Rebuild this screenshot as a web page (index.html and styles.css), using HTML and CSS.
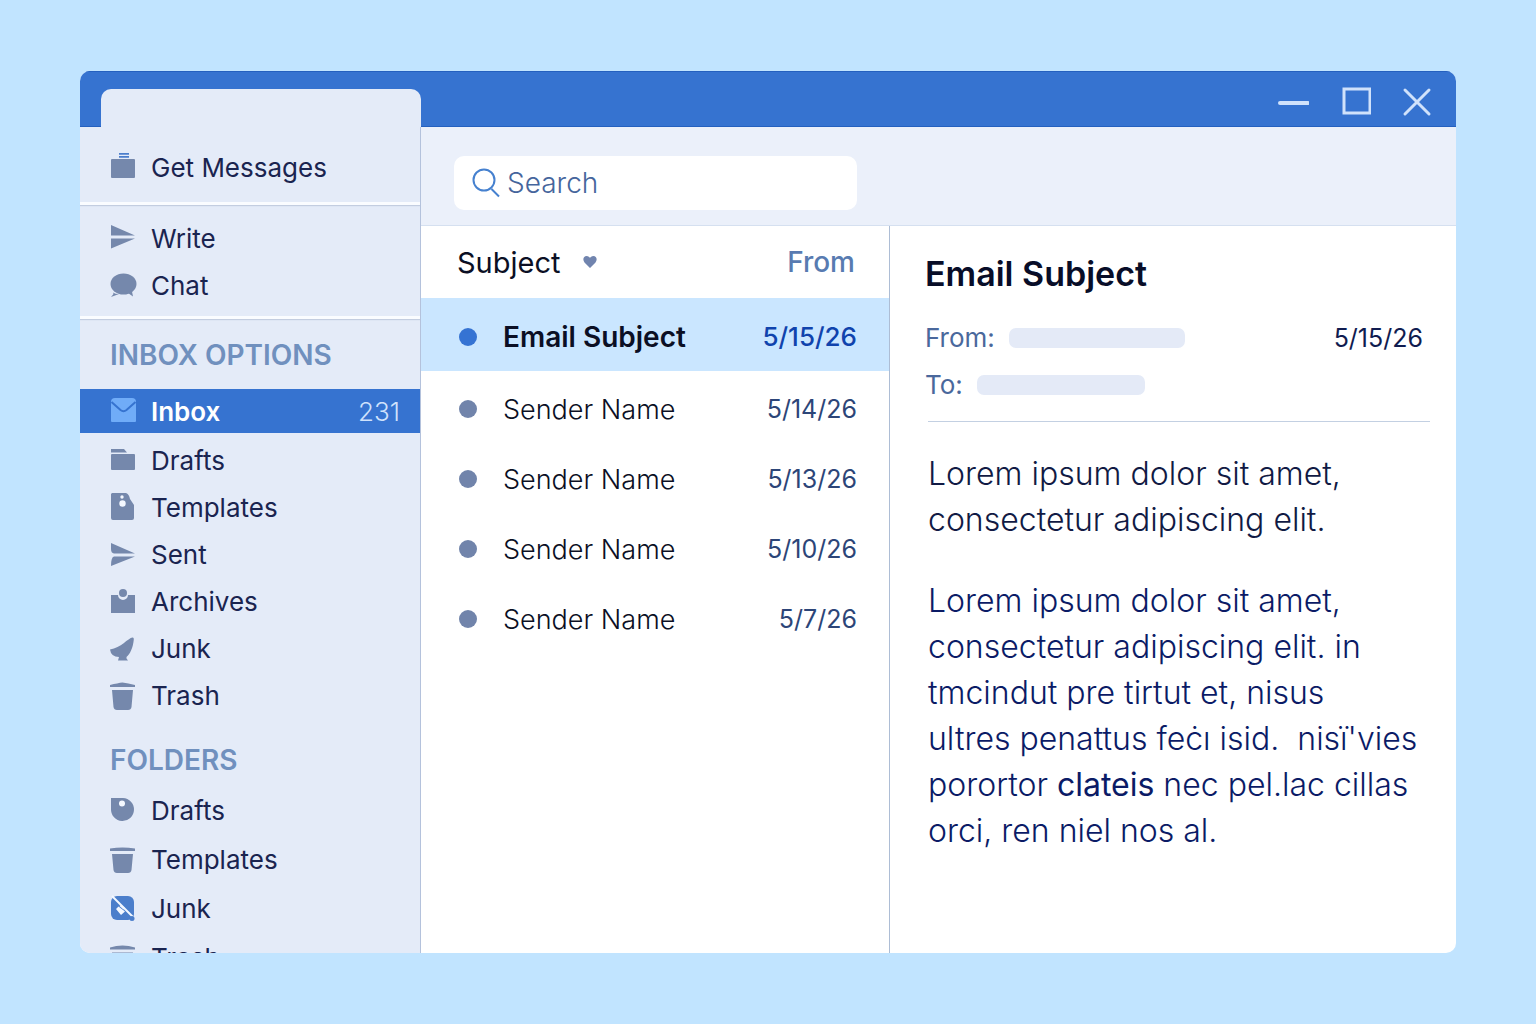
FILE: index.html
```html
<!DOCTYPE html>
<html lang="en">
<head>
    <meta charset="UTF-8">
    <meta name="viewport" content="width=device-width, initial-scale=1.0">
    <title>Mail</title>
    <link rel="stylesheet" href="styles.css">
</head>
<body>
    <div class="window">
        <header class="titlebar">
            <div class="tab"></div>
            <div class="window-controls">
                <button type="button" aria-label="Minimize">
                    <svg width="32" height="32" viewBox="0 0 32 32"><path d="M3 18h28" stroke-width="4"/></svg>
                </button>
                <button type="button" aria-label="Maximize">
                    <svg width="32" height="32" viewBox="0 0 32 32"><path d="M5 4h26v24H5z" stroke-width="3"/></svg>
                </button>
                <button type="button" aria-label="Close">
                    <svg width="32" height="32" viewBox="0 0 32 32"><path d="M4 5l24 24M28 5L4 29" stroke-width="3"/></svg>
                </button>
            </div>
        </header>

        <nav class="sidebar">
            <div class="actions">
                <button type="button" class="item">
                    <svg class="icon" viewBox="0 0 26 28"><path class="blue" d="M9-1h10v1.700H9zM9 2h10v1.700H9z"/><rect x="1" y="5" width="24" height="19" rx="1"/></svg>
                    Get Messages
                </button>
            </div>
            <div class="actions compact">
                <button type="button" class="item">
                    <svg class="icon" viewBox="0 0 26 28"><path d="M1 0l24 10.500H1zM1 13.500h24L1 23.500z"/></svg>
                    Write
                </button>
                <button type="button" class="item">
                    <svg class="icon" viewBox="0 0 26 28"><ellipse cx="13.500" cy="12" rx="13" ry="10.500"/><path d="M3 20.500q2 1.500 6 1.500l-8 3 2.500-3zM18 21l4-1.500 1 5z"/></svg>
                    Chat
                </button>
            </div>

            <h2>INBOX OPTIONS</h2>
            <a href="#inbox" class="item current">
                <svg class="icon" viewBox="0 0 26 28"><path d="M5 1h17q4 0 4 4v19q0 1-1 1H2q-1 0-1-1V5q0-4 4-4z"/><path class="flap" d="M1.500 5l9 8q3 2.400 6 0L25.500 5"/></svg>
                Inbox
                <span class="count">231</span>
            </a>
            <div class="group">
                <a href="#drafts" class="item">
                    <svg class="icon" viewBox="0 0 26 28"><path d="M1 2h13l3 3.500H1z"/><rect x="1" y="7" width="24" height="16" rx="1"/></svg>
                    Drafts
                </a>
                <a href="#templates" class="item">
                    <svg class="icon" viewBox="0 0 26 28"><path d="M2-1h14q3 1 4 6l4 6v13q0 2-2 2H3q-2 0-2-2V0z"/><circle class="hole" cx="12" cy="3" r="1.700"/><circle class="hole" cx="12.500" cy="9.500" r="3.200"/></svg>
                    Templates
                </a>
                <a href="#sent" class="item">
                    <svg class="icon" viewBox="0 0 26 28"><path d="M1 2l24 10.500H4Q1 12 1 8zM1 25q0-9 3-9.500h21z"/></svg>
                    Sent
                </a>
                <a href="#archives" class="item">
                    <svg class="icon" viewBox="0 0 26 28"><path d="M1 7h7a5 5 0 0 0 10 0h7v18H1z"/><circle cx="13" cy="5" r="4"/></svg>
                    Archives
                </a>
                <a href="#junk" class="item">
                    <svg class="icon" viewBox="0 0 26 28"><path d="M0 14.500C11 13 18 3 22.500 2.500q1.500-.2 1.300 2C23 13 20 19 16.500 22v1.500l1.500 2H8l1-3.500Q1 22 0 14.500z"/></svg>
                    Junk
                </a>
                <a href="#trash" class="item">
                    <svg class="icon" viewBox="0 0 26 28"><path d="M0 3Q8 1 12.500.5 18 1 25 3v2H0zM2 8h21l-1.500 17q-.5 3-3.500 3H7q-3 0-3.500-3z"/></svg>
                    Trash
                </a>
            </div>

            <h2 class="folders-heading">FOLDERS</h2>
            <div class="group roomy">
                <a href="#folder-drafts" class="item">
                    <svg class="icon" viewBox="0 0 26 28"><path d="M1 1h12a11.500 11.500 0 1 1-12 11z"/><circle class="hole" cx="12" cy="6.500" r="3"/></svg>
                    Drafts
                </a>
                <a href="#folder-templates" class="item">
                    <svg class="icon" viewBox="0 0 26 28"><path d="M0 2.500q12.500-2 25 0V5H0zM2 8h21l-1.500 16q-.5 3-3.500 3H7q-3 0-3.500-3z"/></svg>
                    Templates
                </a>
                <a href="#folder-junk" class="item">
                    <svg class="icon" viewBox="0 0 26 28"><rect class="blue" x="1" y="1" width="23" height="24" rx="6"/><path class="slash" d="M2 1l21 21"/><path class="hole" d="M6 14l2.500-2.500 6.500 5-4 3.500zM9.500 11l2-1 3.500 3-1.500 1.500z"/><circle class="blue" cx="22" cy="23.500" r="2.500"/></svg>
                    Junk
                </a>
                <a href="#folder-trash" class="item">
                    <svg class="icon" viewBox="0 0 26 28"><path d="M0 3.500q12.500-4 25 0v2H0zM2 8.500h21L21.500 24q-.5 3-3.500 3H7q-3 0-3.500-3z"/></svg>
                    Trash
                </a>
            </div>
        </nav>

        <div class="toolbar">
            <label class="search">
                <svg width="30" height="30" viewBox="0 0 30 30"><circle cx="12" cy="12" r="10.500"/><path d="M19.500 21l7.500 7.500"/></svg>
                <input type="search" placeholder="Search" aria-label="Search">
            </label>
        </div>

        <section class="messages">
            <table>
                <thead>
                    <tr>
                        <th colspan="2" class="subject">Subject
                            <svg width="14" height="12" viewBox="0 0 14 12"><path d="M7 12L1.500 6.500C-1 3 1 0 3.500 0 5.500 0 6.500 1 7 2 7.500 1 8.500 0 10.500 0 13 0 15 3 12.500 6.500z"/></svg>
                        </th>
                        <th class="from">From</th>
                    </tr>
                </thead>
                <tbody>
                    <tr class="selected">
                        <td class="status"><span class="dot"></span></td>
                        <td>Email Subject</td>
                        <td class="date">5/15/26</td>
                    </tr>
                    <tr>
                        <td class="status"><span class="dot"></span></td>
                        <td>Sender Name</td>
                        <td class="date">5/14/26</td>
                    </tr>
                    <tr>
                        <td class="status"><span class="dot"></span></td>
                        <td>Sender Name</td>
                        <td class="date">5/13/26</td>
                    </tr>
                    <tr>
                        <td class="status"><span class="dot"></span></td>
                        <td>Sender Name</td>
                        <td class="date">5/10/26</td>
                    </tr>
                    <tr>
                        <td class="status"><span class="dot"></span></td>
                        <td>Sender Name</td>
                        <td class="date">5/7/26</td>
                    </tr>
                </tbody>
            </table>
        </section>

        <article class="reader">
            <h1>Email Subject</h1>
            <div class="meta">
                <span>From:</span>
                <span class="blank wide"></span>
                <time datetime="2026-05-15">5/15/26</time>
            </div>
            <div class="meta">
                <span>To:</span>
                <span class="blank"></span>
            </div>
            <div class="body">
                <p class="intro">Lorem ipsum dolor sit amet,<br>
                consectetur adipiscing elit.</p>
                <p>Lorem ipsum dolor sit amet,<br>
                consectetur adipiscing elit. in<br>
                tmcindut pre tirtut et, nisus<br>
                ultres penattus feċı isid.&nbsp; nisï'vies<br>
                porortor <b>clateis</b> nec pel.lac cillas<br>
                orci, ren niel nos al.</p>
            </div>
        </article>
    </div>
</body>
</html>
```
FILE: styles.css
```css
* {
    box-sizing: border-box;
}
body {
    margin: 0;
    padding: 71px 80px;
    height: 100vh;
    font-family: Inter, "Liberation Sans", sans-serif;
    font-size: 26px;
    color: #1a2450;
    background-color: #c1e4ff;
}
button {
    border: none;
    background: none;
    font: inherit;
    color: inherit;
    cursor: pointer;
}
.window {
    height: 100%;
    display: grid;
    grid-template-columns: 341px 29fr 35fr;
    grid-template-rows: 56px 99px minmax(0, 1fr);
    border-radius: 10px;
    overflow: hidden;
    background-color: white;
}

/* Title bar */
.titlebar {
    grid-column: 1 / -1;
    display: flex;
    align-items: flex-end;
    justify-content: space-between;
    background-color: #3673d0;
    border-top: 1px solid #2460bf;
    border-bottom: 1px solid #2460bf;
}
.tab {
    width: 320px;
    height: 38px;
    margin: 0 0 -1px 21px;
    border-radius: 10px 10px 0 0;
    background-color: #e4ebf8;
}
.window-controls {
    display: flex;
    gap: 30px;
    padding: 0 23px 9px 0;
}
.window-controls button {
    padding: 0;
    height: 32px;
}
.window-controls svg {
    fill: none;
    stroke: #d0e2fb;
    stroke-linecap: round;
}

/* Sidebar */
.sidebar {
    grid-row: 2 / 4;
    overflow: hidden;
    background-color: #e4ebf8;
    border-right: 1px solid #b4c2dc;
}
.actions {
    padding: 17px 0 11px;
    border-bottom: 3px solid #fafcff;
    box-shadow: 0 1px 1px #c3cde0;
}
.actions.compact {
    padding: 10px 0 7px;
}
.item {
    display: flex;
    align-items: center;
    gap: 15px;
    width: 100%;
    height: 47px;
    padding: 0 20px 0 30px;
    color: #1a2450;
    text-decoration: none;
}
.icon {
    width: 26px;
    height: 28px;
    overflow: visible;
    fill: #7588ac;
}
.icon .blue {
    fill: #4b7ecb;
}
.icon .hole {
    fill: #f4f8ff;
}
.icon .slash {
    fill: none;
    stroke: #f4f8ff;
    stroke-width: 2;
}
.sidebar h2 {
    margin: 0;
    padding: 20px 30px 18px;
    font-size: 28px;
    line-height: 32px;
    font-weight: 600;
    color: #7090be;
}
.sidebar .folders-heading {
    padding: 25px 30px 10px;
}
.item.current {
    height: 44px;
    font-weight: 600;
    color: white;
    background-color: #3673d0;
}
.current .icon {
    fill: #70acf8;
}
.current .flap {
    fill: none;
    stroke: #3673d0;
    stroke-width: 2;
}
.count {
    margin-left: auto;
    font-weight: 300;
    color: #d0e2fc;
}
.group {
    padding-top: 4px;
}
.group.roomy {
    padding-top: 0;
}
.roomy .item {
    height: 49px;
}

/* Toolbar */
.toolbar {
    grid-column: 2 / 4;
    padding: 29px 33px 15px;
    background-color: #ebf0fa;
    border-bottom: 1px solid #d5e0f0;
}
.search {
    display: flex;
    align-items: center;
    gap: 5px;
    width: 403px;
    height: 54px;
    padding: 0 18px;
    border-radius: 10px;
    background-color: white;
}
.search svg {
    flex: none;
    fill: none;
    stroke: #4681cf;
    stroke-width: 2;
}
.search input {
    flex: 1;
    min-width: 0;
    padding: 0;
    border: none;
    outline: none;
    background: none;
    font: inherit;
    font-size: 28px;
    font-weight: 300;
}
.search input::placeholder {
    color: #45659c;
    opacity: 1;
}

/* Message list */
.messages {
    border-right: 1px solid #adbdd5;
}
.messages table {
    width: 100%;
    border-spacing: 0;
}
.messages th {
    height: 72px;
    padding: 0;
    text-align: left;
    font-size: 28px;
    font-weight: 400;
    color: #0b0f24;
}
.messages .subject {
    padding-left: 36px;
    font-size: 29px;
}
.subject svg {
    margin: 0 0 5px 14px;
    fill: #7184ae;
}
.messages .from {
    padding-right: 34px;
    text-align: right;
    font-weight: 500;
    color: #587bb1;
}
.messages td {
    height: 70px;
    padding: 0;
    font-size: 27px;
    font-weight: 300;
    color: #0b0f24;
}
.messages .status {
    width: 82px;
    padding-left: 38px;
}
.dot {
    display: block;
    width: 18px;
    height: 18px;
    border-radius: 50%;
    background-color: #7184ab;
}
.messages .date {
    padding-right: 32px;
    text-align: right;
    font-size: 25px;
    font-weight: 400;
    color: #2c4578;
}
.messages .selected td {
    height: 76px;
    padding-top: 4px;
    border-bottom: 3px solid white;
    font-size: 28px;
    font-weight: 600;
    background-color: #cae6ff;
}
.messages .selected .date {
    font-size: 26px;
    font-weight: 500;
    color: #1043ad;
}
.selected .dot {
    background-color: #3573d3;
}

/* Reading pane */
.reader {
    padding: 24px 26px 24px 35px;
}
.reader h1 {
    margin: 0 0 16px;
    font-size: 34px;
    line-height: 48px;
    font-weight: 600;
    color: #080d28;
}
.meta {
    display: flex;
    align-items: center;
    gap: 14px;
    height: 47px;
    font-weight: 400;
    color: #4a689c;
}
.blank {
    width: 168px;
    height: 20px;
    border-radius: 7px;
    background-color: #e4eaf7;
}
.blank.wide {
    width: 176px;
}
.meta time {
    margin-left: auto;
    padding-right: 7px;
    font-size: 25px;
    color: #101c50;
}
.body {
    margin: 13px 0 0 3px;
    padding-top: 29px;
    border-top: 1px solid #c3d0e2;
    font-size: 32px;
    line-height: 46px;
    font-weight: 300;
    color: #0b1b66;
}
.body p {
    margin: 0 0 35px;
}
.body .intro {
    color: #111a44;
}
.body b {
    font-weight: 400;
}
```
